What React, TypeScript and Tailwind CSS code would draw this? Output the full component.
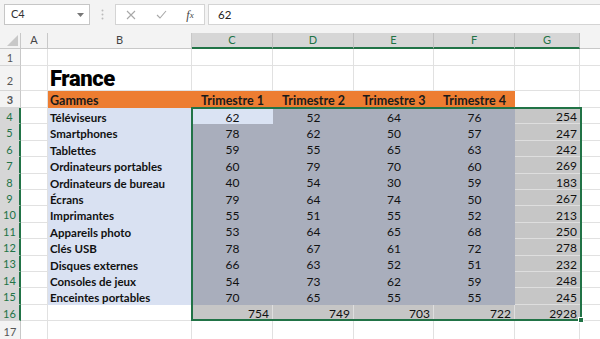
import React from "react";

const rows: [string, number, number, number, number, number][] = [
  ["Téléviseurs", 62, 52, 64, 76, 254],
  ["Smartphones", 78, 62, 50, 57, 247],
  ["Tablettes", 59, 55, 65, 63, 242],
  ["Ordinateurs portables", 60, 79, 70, 60, 269],
  ["Ordinateurs de bureau", 40, 54, 30, 59, 183],
  ["Écrans", 79, 64, 74, 50, 267],
  ["Imprimantes", 55, 51, 55, 52, 213],
  ["Appareils photo", 53, 64, 65, 68, 250],
  ["Clés USB", 78, 67, 61, 72, 278],
  ["Disques externes", 66, 63, 52, 51, 232],
  ["Consoles de jeux", 54, 73, 62, 59, 248],
  ["Enceintes portables", 70, 65, 55, 55, 245],
];

const font = { fontFamily: "Lato, 'Liberation Sans', sans-serif" };

function RowHead({ n, sel, h, pt = "pt-[3px]" }: { n: number; sel?: boolean; h: string; pt?: string }) {
  return (
    <div
      className={`${h} ${pt} w-[21px] shrink-0 flex items-center justify-center text-[11px] border-b border-[#d6d6d6] ${
        sel
          ? "bg-[#d6d6d6] text-[#217346] border-r-2 border-r-[#217346]"
          : "bg-[#f3f3f3] text-[#555] border-r border-r-[#c8c8c8]"
      }`}
    >
      {n}
    </div>
  );
}

function EmptyCols({ from }: { from: number }) {
  const widths = ["w-[27px]", "w-[144px]", "w-[81px]", "w-[81px]", "w-[80px]", "w-[81px]", "w-[65px]"];
  return (
    <>
      {widths.slice(from).map((w, i) => (
        <div key={i} className={`${w} shrink-0 border-r border-b border-[#e1e1e1]`} />
      ))}
      <div className="flex-1 border-b border-[#e1e1e1]" />
    </>
  );
}

export default function App() {
  return (
    <div className="w-[600px] h-[339px] overflow-hidden bg-white text-black" style={font}>
      {/* Formula bar */}
      <div className="h-[33px] bg-[#f3f3f3] flex items-start pt-[4px] pl-[4px]">
        <div className="w-[86px] h-[21px] bg-white border border-[#c6c6c6] flex items-center pl-[6px] pr-[5px] text-[11px] text-[#333]">
          <span className="flex-1">C4</span>
          <svg width="7" height="4" viewBox="0 0 7 4">
            <path d="M0 0 L7 0 L3.5 4 Z" fill="#777" />
          </svg>
        </div>
        <div className="w-[25px] h-[21px] flex items-center justify-center">
          <svg width="3" height="11" viewBox="0 0 3 11">
            <circle cx="1.5" cy="1.5" r="1" fill="#bbb" />
            <circle cx="1.5" cy="5.5" r="1" fill="#bbb" />
            <circle cx="1.5" cy="9.5" r="1" fill="#bbb" />
          </svg>
        </div>
        <div className="w-[90px] h-[21px] bg-white border border-[#d4d4d4] flex items-center">
          <div className="w-[30px] flex justify-center">
            <svg width="10" height="10" viewBox="0 0 10 10">
              <path d="M1 1 L9 9 M9 1 L1 9" stroke="#a8a8a8" strokeWidth="1.1" />
            </svg>
          </div>
          <div className="w-[30px] flex justify-center">
            <svg width="11" height="9" viewBox="0 0 11 9">
              <path d="M1 5 L4 8 L10 1" stroke="#a8a8a8" strokeWidth="1.1" fill="none" />
            </svg>
          </div>
          <div
            className="w-[28px] flex justify-center text-[12px] italic text-[#444]"
            style={{ fontFamily: "'Liberation Serif', serif" }}
          >
            f<span className="text-[9px] mt-[3px]">x</span>
          </div>
        </div>
        <div className="ml-[3px] flex-1 h-[21px] bg-white border border-[#d4d4d4] border-r-0 flex items-center pl-[9px] text-[11.5px] text-[#222]">
          62
        </div>
      </div>

      {/* Grid */}
      <div className="relative text-[12px]">
        {/* Column headers */}
        <div className="flex h-[16px] text-[11px]">
          <div className="w-[21px] shrink-0 bg-[#f3f3f3] border-r border-b border-[#c8c8c8] flex items-end justify-end pr-[2px] pb-[2px]">
            <svg width="11" height="11" viewBox="0 0 11 11">
              <path d="M11 0 L11 11 L0 11 Z" fill="#c8c8c8" />
            </svg>
          </div>
          <div className="w-[27px] shrink-0 bg-[#f3f3f3] border-r border-b border-[#c8c8c8] text-[#444] flex items-center justify-center">A</div>
          <div className="w-[144px] shrink-0 bg-[#f3f3f3] border-r border-b border-[#c8c8c8] text-[#444] flex items-center justify-center">B</div>
          <div className="w-[81px] shrink-0 bg-[#d6d6d6] border-r border-r-[#bfbfbf] border-b-2 border-b-[#217346] text-[#217346] flex items-center justify-center">C</div>
          <div className="w-[81px] shrink-0 bg-[#d6d6d6] border-r border-r-[#bfbfbf] border-b-2 border-b-[#217346] text-[#217346] flex items-center justify-center">D</div>
          <div className="w-[80px] shrink-0 bg-[#d6d6d6] border-r border-r-[#bfbfbf] border-b-2 border-b-[#217346] text-[#217346] flex items-center justify-center">E</div>
          <div className="w-[81px] shrink-0 bg-[#d6d6d6] border-r border-r-[#bfbfbf] border-b-2 border-b-[#217346] text-[#217346] flex items-center justify-center">F</div>
          <div className="w-[65px] shrink-0 bg-[#d6d6d6] border-r border-r-[#bfbfbf] border-b-2 border-b-[#217346] text-[#217346] flex items-center justify-center">G</div>
          <div className="flex-1 bg-[#f3f3f3] border-b border-[#c8c8c8]" />
        </div>

        {/* Row 1 */}
        <div className="flex h-[17px]">
          <RowHead n={1} h="h-[17px]" />
          <EmptyCols from={0} />
        </div>

        {/* Row 2 */}
        <div className="flex h-[25px]">
          <RowHead n={2} h="h-[25px]" pt="pt-[7px]" />
          <div className="w-[27px] shrink-0 border-r border-b border-[#e1e1e1]" />
          <div
            className="w-[144px] shrink-0 border-r border-b border-[#e1e1e1] flex items-end pl-[2px] pb-[0px] text-[22px] font-black leading-none tracking-[-0.4px]"
            style={{ fontFamily: "Roboto, 'Liberation Sans', sans-serif" }}
          >
            France
          </div>
          <EmptyCols from={2} />
        </div>

        {/* Row 3 */}
        <div className="flex h-[17px] font-bold text-[#1a1a1a] text-[12.5px]">
          <RowHead n={3} h="h-[17px]" />
          <div className="w-[27px] shrink-0 border-r border-b border-[#e1e1e1]" />
          <div className="w-[144px] shrink-0 bg-[#ed7d31] flex items-center pl-[2px] pt-[3px]">Gammes</div>
          <div className="w-[81px] shrink-0 bg-[#ed7d31] flex items-center justify-center pt-[3px]">Trimestre 1</div>
          <div className="w-[81px] shrink-0 bg-[#ed7d31] flex items-center justify-center pt-[3px]">Trimestre 2</div>
          <div className="w-[80px] shrink-0 bg-[#ed7d31] flex items-center justify-center pt-[3px]">Trimestre 3</div>
          <div className="w-[81px] shrink-0 bg-[#ed7d31] flex items-center justify-center pt-[3px]">Trimestre 4</div>
          <EmptyCols from={6} />
        </div>

        {/* Rows 4-15 */}
        {rows.map((r, i) => (
          <div key={i} className="flex h-[16.4px] text-[#111]">
            <RowHead n={i + 4} sel h="h-[16.4px]" />
            <div className="w-[27px] shrink-0 border-r border-b border-[#e1e1e1]" />
            <div className="w-[144px] shrink-0 bg-[#d9e1f2] flex items-center pl-[2px] pt-[3px] font-bold text-[11.5px]">{r[0]}</div>
            <div className={`w-[81px] shrink-0 flex items-center justify-center pt-[3px] ${i === 0 ? "bg-[#dae3f3]" : "bg-[#a9aebc]"}`}>{r[1]}</div>
            <div className="w-[81px] shrink-0 bg-[#a9aebc] flex items-center justify-center pt-[3px]">{r[2]}</div>
            <div className="w-[80px] shrink-0 bg-[#a9aebc] flex items-center justify-center pt-[3px]">{r[3]}</div>
            <div className="w-[81px] shrink-0 bg-[#a9aebc] flex items-center justify-center pt-[3px]">{r[4]}</div>
            <div className="w-[65px] shrink-0 bg-[#c6c6c6] border-b border-[#dedede] flex items-center justify-end pr-[3px] pt-[3px]">{r[5]}</div>
            <div className="flex-1 border-b border-[#e1e1e1]" />
          </div>
        ))}

        {/* Row 16 */}
        <div className="flex h-[16.4px] text-[#111]">
          <RowHead n={16} sel h="h-[16.4px]" />
          <div className="w-[27px] shrink-0 border-r border-b border-[#e1e1e1]" />
          <div className="w-[144px] shrink-0 border-r border-b border-[#e1e1e1]" />
          <div className="w-[81px] shrink-0 bg-[#c6c6c6] border-r border-[#dedede] flex items-center justify-end pr-[3px] pt-[3px]">754</div>
          <div className="w-[81px] shrink-0 bg-[#c6c6c6] border-r border-[#dedede] flex items-center justify-end pr-[3px] pt-[3px]">749</div>
          <div className="w-[80px] shrink-0 bg-[#c6c6c6] border-r border-[#dedede] flex items-center justify-end pr-[3px] pt-[3px]">703</div>
          <div className="w-[81px] shrink-0 bg-[#c6c6c6] border-r border-[#dedede] flex items-center justify-end pr-[3px] pt-[3px]">722</div>
          <div className="w-[65px] shrink-0 bg-[#c6c6c6] flex items-center justify-end pr-[3px] pt-[3px]">2928</div>
          <div className="flex-1 border-b border-[#e1e1e1]" />
        </div>

        {/* Row 17 */}
        <div className="flex h-[20px]">
          <RowHead n={17} h="h-[20px]" pt="pt-[3px]" />
          <EmptyCols from={0} />
        </div>

        {/* Selection border */}
        <div className="absolute left-[191px] top-[74px] w-[391px] h-[214px] border-2 border-[#217346] pointer-events-none" />
        <div className="absolute left-[578px] top-[284px] w-[6px] h-[6px] bg-[#217346] border border-white pointer-events-none" />
      </div>
    </div>
  );
}
